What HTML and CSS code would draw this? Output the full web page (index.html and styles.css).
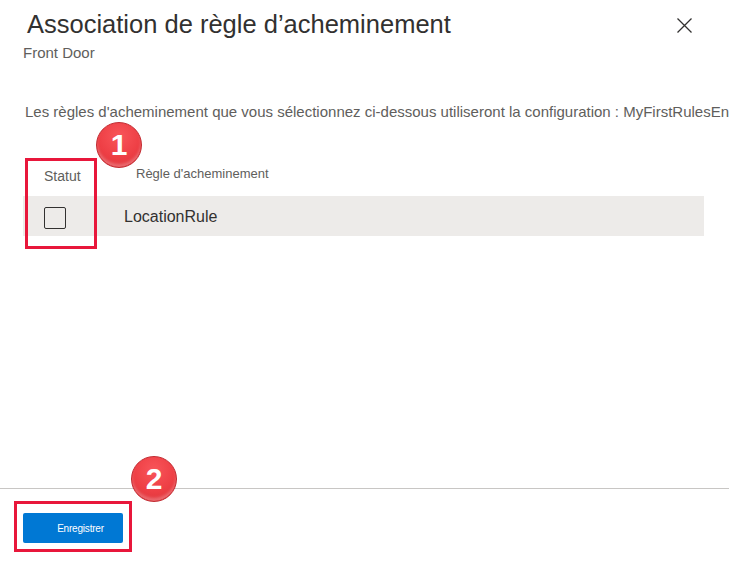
FILE: index.html
```html
<!DOCTYPE html>
<html lang="fr">
<head>
<meta charset="utf-8">
<title>Association de règle d'acheminement</title>
<link rel="stylesheet" href="styles.css">
</head>
<body>
<div class="panel">
  <div class="header">
    <h1 class="title">Association de règle d’acheminement</h1>
    <svg class="close" width="15" height="15" viewBox="0 0 15 15" aria-label="Fermer"><path d="M0.5 0.5 L14.5 14.5 M14.5 0.5 L0.5 14.5" stroke="#323130" stroke-width="1.3" fill="none"/></svg>
  </div>
  <div class="subtitle">Front Door</div>
  <p class="desc">Les règles d'acheminement que vous sélectionnez ci-dessous utiliseront la configuration : MyFirstRulesEngine</p>
  <div class="table">
    <div class="thead">
      <div class="th th-status">Statut</div>
      <div class="th th-rule">Règle d'acheminement</div>
    </div>
    <div class="trow">
      <div class="td td-status"><span class="checkbox"></span></div>
      <div class="td td-rule">LocationRule</div>
    </div>
  </div>
  <div class="spacer"></div>
  <div class="footer">
    <button class="btn-primary">Enregistrer</button>
  </div>
</div>
<div class="annot annot-1"></div>
<div class="annot annot-2"></div>
<div class="badge badge-1">1</div>
<div class="badge badge-2">2</div>
</body>
</html>
```
FILE: styles.css
```css
html, body {
  margin: 0;
  padding: 0;
  background: #ffffff;
  overflow: hidden;
}
body {
  width: 729px;
  height: 561px;
  position: relative;
  font-family: "Liberation Sans", Arial, sans-serif;
  color: #323130;
}
.panel {
  height: 561px;
  display: flex;
  flex-direction: column;
}
.header {
  display: flex;
  align-items: center;
  justify-content: space-between;
  padding: 8px 37px 0 27px;
}
.title {
  margin: 0;
  font-size: 25.5px;
  line-height: 32px;
  font-weight: 400;
  color: #323130;
}
.close {
  display: block;
  margin-top: 2px;
}
.subtitle {
  margin: 3px 0 0 23px;
  font-size: 15px;
  line-height: 20px;
  color: #605e5c;
}
.desc {
  margin: 39px 0 0 25px;
  font-size: 15px;
  line-height: 20px;
  color: #605e5c;
  white-space: nowrap;
}
.table {
  margin: 34px 25px 0 23px;
}
.thead {
  display: flex;
  height: 40px;
  align-items: center;
}
.th-status {
  width: 101px;
  box-sizing: border-box;
  padding-left: 21px;
  font-size: 14px;
  line-height: 20px;
  color: #605e5c;
}
.th-rule {
  padding-left: 12px;
  font-size: 13px;
  line-height: 16px;
  color: #605e5c;
  margin-bottom: 4px;
}
.trow {
  display: flex;
  height: 40px;
  align-items: center;
  background: #edebe9;
}
.td-status {
  width: 101px;
  box-sizing: border-box;
  padding-left: 21px;
  display: flex;
  align-items: center;
}
.checkbox {
  display: block;
  width: 20px;
  height: 20px;
  border: 1px solid #323130;
  border-radius: 2px;
  margin-top: 3px;
}
.td-rule {
  font-size: 16px;
  line-height: 20px;
  color: #323130;
  margin-top: 2px;
}
.spacer {
  flex: 1;
}
.footer {
  border-top: 1px solid #c8c6c4;
  padding: 24px 0 18px 23px;
}
.btn-primary {
  display: block;
  width: 100px;
  height: 30px;
  border: none;
  border-radius: 2px;
  background: #0078d4;
  color: #ffffff;
  font-family: "Liberation Sans", Arial, sans-serif;
  font-size: 10px;
  letter-spacing: -0.2px;
  padding: 0 0 0 15px;
}
.annot {
  position: absolute;
  border: 3px solid #e8173b;
  box-sizing: border-box;
}
.annot-1 {
  left: 25px;
  top: 158px;
  width: 72px;
  height: 91px;
}
.annot-2 {
  left: 14px;
  top: 501px;
  width: 118px;
  height: 51px;
}
.badge {
  position: absolute;
  width: 46px;
  height: 46px;
  box-sizing: border-box;
  border-radius: 50%;
  border: 1px solid #c22a30;
  background: radial-gradient(circle at 50% 30%, #f8555a 0%, #ee3f45 55%, #d8333a 100%);
  box-shadow: inset 0 -3px 3px rgba(255, 255, 255, 0.25);
  color: #ffffff;
  font-family: "Liberation Sans", Arial, sans-serif;
  font-weight: 700;
  font-size: 30px;
  line-height: 44px;
  text-align: center;
}
.badge-1 {
  left: 96px;
  top: 122px;
}
.badge-2 {
  left: 131px;
  top: 456px;
}
```
